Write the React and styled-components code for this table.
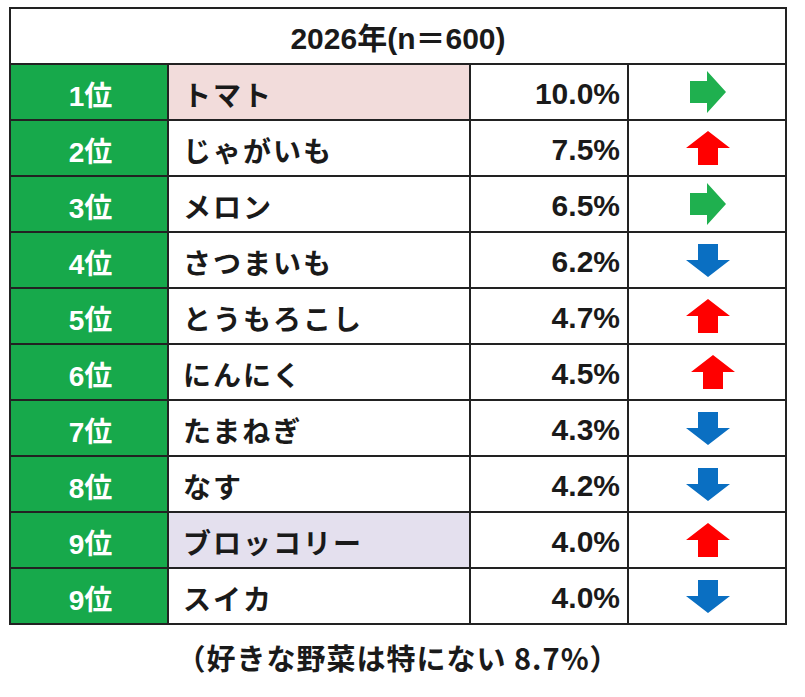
import React from "react";
import styled, { createGlobalStyle } from "styled-components";

const GlobalStyle = createGlobalStyle`
  body {
    margin: 0;
    background: #ffffff;
    font-family: "Liberation Sans", "Noto Sans CJK JP", sans-serif;
    color: #1a1a1a;
  }
`;

const rows = [
  { rank: "1位", name: "トマト", pct: "10.0%", trend: "flat", tint: "pink" },
  { rank: "2位", name: "じゃがいも", pct: "7.5%", trend: "up" },
  { rank: "3位", name: "メロン", pct: "6.5%", trend: "flat" },
  { rank: "4位", name: "さつまいも", pct: "6.2%", trend: "down" },
  { rank: "5位", name: "とうもろこし", pct: "4.7%", trend: "up" },
  { rank: "6位", name: "にんにく", pct: "4.5%", trend: "up" },
  { rank: "7位", name: "たまねぎ", pct: "4.3%", trend: "down" },
  { rank: "8位", name: "なす", pct: "4.2%", trend: "down" },
  { rank: "9位", name: "ブロッコリー", pct: "4.0%", trend: "up", tint: "lavender" },
  { rank: "9位", name: "スイカ", pct: "4.0%", trend: "down" },
];

const tints = {
  pink: "#f2dcdb",
  lavender: "#e4e0ee",
};

const Page = styled.div`
  padding: 7px 0 0 9px;
  width: 778px;
`;

const Grid = styled.div`
  display: grid;
  grid-template-columns: 156px 300px 156px 156px;
  grid-auto-rows: 54px;
  gap: 2px;
  padding: 2px;
  background: #222222;
`;

const Header = styled.div`
  grid-column: 1 / -1;
  background: #ffffff;
  display: flex;
  align-items: center;
  justify-content: center;
  font-size: 30px;
  font-weight: 700;
`;

const Rank = styled.div`
  background: #17a94b;
  color: #ffffff;
  display: flex;
  align-items: center;
  justify-content: center;
  font-size: 28px;
  font-weight: 700;
  padding: 3px 0 0 3px;
`;

const Name = styled.div`
  background: ${({ $tint }) => tints[$tint] || "#ffffff"};
  display: flex;
  align-items: center;
  padding: 4px 0 0 14px;
  font-family: "Noto Sans CJK JP", sans-serif;
  font-size: 28px;
  font-weight: 700;
  letter-spacing: 2px;
`;

const Pct = styled.div`
  background: #ffffff;
  display: flex;
  align-items: center;
  justify-content: flex-end;
  padding: 4px 7px 0 0;
  font-size: 30px;
  font-weight: 700;
`;

const Trend = styled.div`
  background: #ffffff;
  display: flex;
  align-items: center;
  justify-content: center;
  padding-left: ${({ $shift }) => 2 + ($shift || 0)}px;
`;

const Footer = styled.div`
  margin-top: 15px;
  text-align: center;
  font-family: "Noto Sans CJK JP", sans-serif;
  font-size: 29px;
  font-weight: 700;
  letter-spacing: 1px;
  line-height: 34px;
`;

const arrowShapes = {
  flat: { w: 36, h: 42, fill: "#1fb04f", points: "0,10 17,10 17,0 36,21 17,42 17,32 0,32" },
  up: { w: 44, h: 34, fill: "#ff0000", points: "22,0 44,17 32,17 32,34 12,34 12,17 0,17" },
  down: { w: 44, h: 33, fill: "#0a6fc2", points: "12,0 32,0 32,16 44,16 22,33 0,16 12,16" },
};

const Arrow = ({ dir }) => {
  const s = arrowShapes[dir];
  return (
    <svg width={s.w} height={s.h} viewBox={`0 0 ${s.w} ${s.h}`}>
      <polygon points={s.points} fill={s.fill} />
    </svg>
  );
};

export default function App() {
  return (
    <>
      <GlobalStyle />
      <Page>
        <Grid>
          <Header>2026年(n＝600)</Header>
          {rows.map((r, i) => (
            <React.Fragment key={i}>
              <Rank>{r.rank}</Rank>
              <Name $tint={r.tint}>{r.name}</Name>
              <Pct>{r.pct}</Pct>
              <Trend $shift={i === 5 ? 10 : 0}>
                <Arrow dir={r.trend} />
              </Trend>
            </React.Fragment>
          ))}
        </Grid>
        <Footer>（好きな野菜は特にない 8.7%）</Footer>
      </Page>
    </>
  );
}
